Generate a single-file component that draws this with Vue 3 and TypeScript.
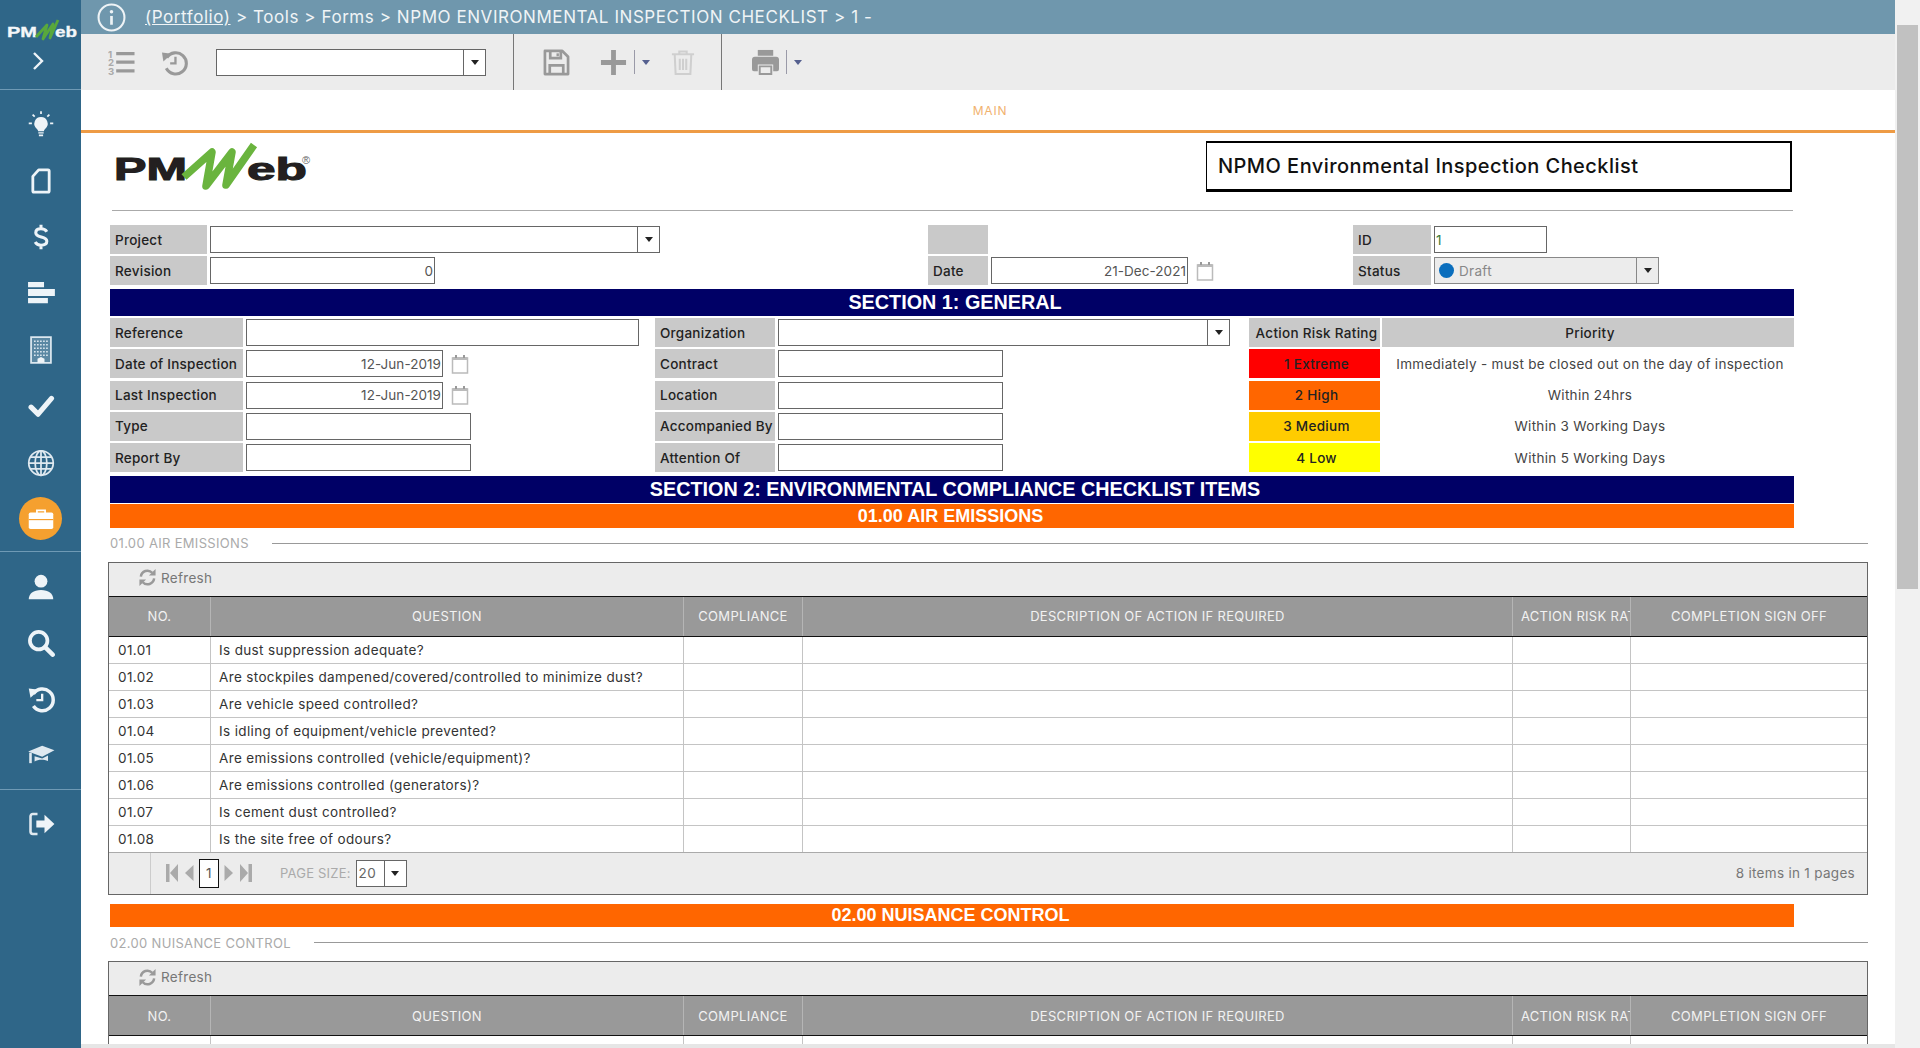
<script setup lang="ts">
type Row = [string, string]

const checklist: { title: string; rows: Row[] }[] = [
  {
    title: '01.00 AIR EMISSIONS',
    rows: [
      ['01.01', 'Is dust suppression adequate?'],
      ['01.02', 'Are stockpiles dampened/covered/controlled to minimize dust?'],
      ['01.03', 'Are vehicle speed controlled?'],
      ['01.04', 'Is idling of equipment/vehicle prevented?'],
      ['01.05', 'Are emissions controlled (vehicle/equipment)?'],
      ['01.06', 'Are emissions controlled (generators)?'],
      ['01.07', 'Is cement dust controlled?'],
      ['01.08', 'Is the site free of odours?'],
    ],
  },
  { title: '02.00 NUISANCE CONTROL', rows: [['', '']] },
]

const columns = ['NO.', 'QUESTION', 'COMPLIANCE', 'DESCRIPTION OF ACTION IF REQUIRED', 'ACTION RISK RATING', 'COMPLETION SIGN OFF']

const ratings = [
  { label: '1 Extreme', cls: 'r-extreme', text: 'Immediately - must be closed out on the day of inspection' },
  { label: '2 High', cls: 'r-high', text: 'Within 24hrs' },
  { label: '3 Medium', cls: 'r-medium', text: 'Within 3 Working Days' },
  { label: '4 Low', cls: 'r-low', text: 'Within 5 Working Days' },
]
</script>

<template>
  <div class="app">
    <aside class="sidebar">
      <div class="side-top">
        <svg class="side-logo" viewBox="0 0 81 46">
          <text x="7" y="37" class="logo-text side" textLength="30" lengthAdjust="spacingAndGlyphs">PM</text>
          <text x="55" y="37" class="logo-text side" textLength="22" lengthAdjust="spacingAndGlyphs">eb</text>
          <path d="M36 37 47 25 43 39 53 24 50 38 58 20" fill="none" stroke="#58a83c" stroke-width="2.800" stroke-linejoin="round" />
        </svg>
        <svg class="side-chevron" viewBox="0 0 16 20"><path d="M4 2l8 8-8 8" fill="none" stroke="#eef4f8" stroke-width="2.400" /></svg>
      </div>

      <div class="side-group first">
        <div class="nav-item">
          <svg viewBox="0 0 24 24">
            <path d="M12 6a5.700 5.700 0 0 0-3.500 10.200c.6.5 1 1.200 1 2h5c0-.8.4-1.500 1-2A5.700 5.700 0 0 0 12 6z" fill="#eef4f8" />
            <path d="M9.700 19h4.600v1.200H9.700zM10.200 21h3.600v1.600h-3.600z" fill="#eef4f8" />
            <path d="M12 1v2.500M4.800 4l1.800 1.700M19.200 4l-1.800 1.700M1.500 11.500h2.700M19.800 11.500h2.700" stroke="#eef4f8" stroke-width="1.500" fill="none" />
          </svg>
        </div>
        <div class="nav-item">
          <svg viewBox="0 0 24 24"><path d="M10 2.500h8a1 1 0 0 1 1 1v17a1 1 0 0 1-1 1H6a1 1 0 0 1-1-1V8z" fill="none" stroke="#eef4f8" stroke-width="2.400" stroke-linejoin="round" /></svg>
        </div>
        <div class="nav-item">
          <svg viewBox="0 0 24 24">
            <path d="M17 7.500C16 5.800 14.300 5 12 5 9.300 5 7.500 6.300 7.500 8.400c0 4.900 9.500 2.400 9.500 7.300 0 2-2 3.300-5 3.300-2.300 0-4-.9-5-2.700M12 1.500V5M12 19v3.500" fill="none" stroke="#eef4f8" stroke-width="2.600" />
          </svg>
        </div>
        <div class="nav-item">
          <svg viewBox="0 0 24 24"><path d="M.9 2.600h13.700v4.500H.9zM.9 8.600h23v6H.9zM.9 16.300h17v4.500H.9z" fill="#eef4f8" /></svg>
        </div>
        <div class="nav-item">
          <svg viewBox="0 0 24 24">
            <path d="M3.500 1h17v22H3.500z" fill="#5b88a3" stroke="#dbe7ef" stroke-width="1.500" />
            <path d="M6 4.500h12M6 7.500h12M6 10.500h12M6 13.500h12M6 16.500h12" stroke="#dbe7ef" stroke-width="1.400" stroke-dasharray="1.400 1.200" />
            <path d="M9 23v-3.500l3-1.500 3 1.500V23z" fill="#eef4f8" />
          </svg>
        </div>
        <div class="nav-item">
          <svg viewBox="0 0 24 24"><path d="M3.500 13l6 6L21 5.500" fill="none" stroke="#eef4f8" stroke-width="4.400" stroke-linecap="round" stroke-linejoin="round" /></svg>
        </div>
        <div class="nav-item">
          <svg viewBox="0 0 24 24" fill="none" stroke="#dfe9f0" stroke-width="1.500">
            <circle cx="12" cy="12" r="10.500" />
            <ellipse cx="12" cy="12" rx="5" ry="10.500" />
            <path d="M12 1.500v21M1.500 12h21M3.200 7h17.600M3.200 17h17.600" />
          </svg>
        </div>
        <div class="nav-item">
          <div class="nav-active">
            <svg viewBox="0 0 24 24">
              <path d="M8.500 7V4.500h7V7" fill="none" stroke="#fff" stroke-width="1.500" />
              <rect x="1.500" y="6.500" width="21" height="14" rx="1.500" fill="#fff" />
              <path d="M1.500 12.500h21" stroke="#f5a02f" stroke-width="1" />
            </svg>
          </div>
        </div>
      </div>

      <div class="side-group second">
        <div class="nav-item">
          <svg viewBox="0 0 24 24" fill="#eef4f8">
            <circle cx="12" cy="7" r="5.500" />
            <path d="M1.500 22.500c0-5 4-8 10.500-8s10.500 3 10.500 8z" />
          </svg>
        </div>
        <div class="nav-item">
          <svg viewBox="0 0 24 24" fill="none" stroke="#eef4f8">
            <circle cx="10" cy="10" r="7.500" stroke-width="3.200" />
            <path d="M15.500 15.500 22 22" stroke-width="3.800" stroke-linecap="round" />
          </svg>
        </div>
        <div class="nav-item">
          <svg viewBox="0 0 24 24">
            <path d="M5.500 7.500A9.300 9.300 0 1 1 5.500 18" fill="none" stroke="#eef4f8" stroke-width="3" />
            <path d="M1.500 3l9 1-7.500 7z" fill="#eef4f8" />
            <path d="M13 7.500V13H8" fill="none" stroke="#eef4f8" stroke-width="2" />
          </svg>
        </div>
        <div class="nav-item">
          <svg viewBox="0 0 24 24" fill="#dfe9f0">
            <path d="M13 4 1 9l12 4.500L23.500 8z" />
            <path d="M6.500 13v4.500c3-1.800 8-1.800 11.500-.3V12.500L13 15z" />
            <path d="M3 10v9" stroke="#dfe9f0" stroke-width="2.200" />
          </svg>
        </div>
      </div>

      <div class="side-group third">
        <div class="nav-item">
          <svg viewBox="0 0 24 24">
            <path d="M9 3.500H5a2 2 0 0 0-2 2v13a2 2 0 0 0 2 2h4" fill="none" stroke="#dfe9f0" stroke-width="2.200" />
            <path d="M8 9h7V4l8.500 8-8.500 8v-5H8z" fill="#eef4f8" />
          </svg>
        </div>
      </div>
    </aside>

    <div class="main">
      <header class="crumb">
        <svg class="info" viewBox="0 0 28 28">
          <circle cx="14" cy="14" r="12.500" fill="none" stroke="#eef3f6" stroke-width="2" />
          <circle cx="14" cy="8.500" r="1.700" fill="#eef3f6" />
          <path d="M14 12.500v8.500" stroke="#eef3f6" stroke-width="2.600" />
        </svg>
        <span class="crumb-text"><u>(Portfolio)</u> &gt; Tools &gt; Forms &gt; NPMO ENVIRONMENTAL INSPECTION CHECKLIST &gt; 1 -</span>
      </header>

      <div class="toolbar">
        <div class="tool-group first">
          <svg class="tool" viewBox="0 0 28 28">
            <text x="0" y="9" class="tool-num">1</text>
            <text x="0" y="18" class="tool-num">2</text>
            <text x="0" y="27" class="tool-num">3</text>
            <path d="M8.500 3h19v3.400h-19zM8.500 12h19v3.400h-19zM8.500 21h19v3.400h-19z" fill="#999" />
          </svg>
          <svg class="tool" viewBox="0 0 28 28">
            <path d="M6 9a11 11 0 1 1-.5 11" fill="none" stroke="#999" stroke-width="3.200" />
            <path d="M1 3.500l10 1.500-8.500 8z" fill="#999" />
            <path d="M15 8v7H9.500" fill="none" stroke="#999" stroke-width="2.400" />
          </svg>
          <div class="select tool-select"><span class="select-value"></span><span class="select-btn"><i class="caret"></i></span></div>
        </div>
        <div class="tool-group second">
          <svg class="tool" viewBox="0 0 28 28" fill="none" stroke="#999" stroke-width="2.800">
            <path d="M2 2h18l6 6v18H2z" stroke-linejoin="round" />
            <path d="M7.500 2.500v7h11v-7M7 26v-9h14v9" />
            <path d="M14 4.500h2.500v3H14z" fill="#999" stroke="none" />
          </svg>
          <div class="tool-split">
            <svg class="tool" viewBox="0 0 28 28"><path d="M11.500 1h5v10.500H27v5H16.500V27h-5V16.500H1v-5h10.500z" fill="#999" /></svg>
            <span class="split-line"></span>
            <i class="caret small"></i>
          </div>
          <svg class="tool trash" viewBox="0 0 26 28" fill="none" stroke="#cfcfcf" stroke-width="2.200">
            <path d="M1 5h24M9 5V2h8v3M4 5l1 21.500h16L22 5" />
            <path d="M9.500 10v12M13 10v12M16.500 10v12" />
          </svg>
        </div>
        <div class="tool-group third">
          <div class="tool-split">
            <svg class="tool" viewBox="0 0 28 28">
              <path d="M6 1h16v6H6z" fill="#999" />
              <path d="M3 8h22a3 3 0 0 1 3 3v10a2 2 0 0 1-2 2h-4v-7H6v7H2a2 2 0 0 1-2-2V11a3 3 0 0 1 3-3z" fill="#999" />
              <path d="M8 18h12v8H8z" fill="none" stroke="#999" stroke-width="2" />
            </svg>
            <span class="split-line"></span>
            <i class="caret small"></i>
          </div>
        </div>
      </div>

      <div class="tabs"><span class="tab">MAIN</span></div>

      <div class="content">
        <div class="form-head">
          <svg class="logo" viewBox="0 0 210 60">
            <text x="5" y="39" class="logo-text big" textLength="73" lengthAdjust="spacingAndGlyphs">PM</text>
            <text x="138" y="39" class="logo-text big" textLength="60" lengthAdjust="spacingAndGlyphs">eb</text>
            <path d="M75 36 103 11 97 45 123 11 117 44 145 4" fill="none" stroke="#6ab43e" stroke-width="7.500" stroke-linejoin="round" />
            <text x="193" y="23" class="logo-mark">®</text>
          </svg>
          <div class="form-title">NPMO Environmental Inspection Checklist</div>
        </div>
        <div class="rule"></div>

        <div class="top-form">
          <label class="lbl">Project</label>
          <div class="cell"><div class="select project"><span class="select-value"></span><span class="select-btn"><i class="caret"></i></span></div></div>
          <label class="lbl"></label>
          <div class="cell"></div>
          <label class="lbl">ID</label>
          <div class="cell"><input class="input id-input" value="1" readonly /></div>

          <label class="lbl">Revision</label>
          <div class="cell"><input class="input revision num" value="0" readonly /></div>
          <label class="lbl">Date</label>
          <div class="cell">
            <input class="input date-main num" value="21-Dec-2021" readonly />
            <svg class="cal" viewBox="0 0 18 20"><path d="M1.500 4h15v15h-15z" fill="#fff" stroke="#bbb" stroke-width="1.500" /><path d="M1.500 3h15v3h-15z" fill="#bbb" /><path d="M5 1v3M13 1v3" stroke="#999" stroke-width="2" /></svg>
          </div>
          <label class="lbl">Status</label>
          <div class="cell">
            <div class="select status">
              <span class="select-value"><i class="dot"></i>Draft</span>
              <span class="select-btn"><i class="caret"></i></span>
            </div>
          </div>
        </div>

        <div class="section-bar">SECTION 1: GENERAL</div>

        <div class="general">
          <label class="lbl">Reference</label>
          <div class="cell"><input class="input wide" readonly /></div>
          <label class="lbl">Organization</label>
          <div class="cell"><div class="select org"><span class="select-value"></span><span class="select-btn"><i class="caret"></i></span></div></div>
          <div class="rate-head">Action Risk Rating</div>
          <div class="rate-head">Priority</div>

          <label class="lbl">Date of Inspection</label>
          <div class="cell">
            <input class="input date num" value="12-Jun-2019" readonly />
            <svg class="cal" viewBox="0 0 18 20"><path d="M1.500 4h15v15h-15z" fill="#fff" stroke="#bbb" stroke-width="1.500" /><path d="M1.500 3h15v3h-15z" fill="#bbb" /><path d="M5 1v3M13 1v3" stroke="#999" stroke-width="2" /></svg>
          </div>
          <label class="lbl">Contract</label>
          <div class="cell"><input class="input short" readonly /></div>
          <div class="rate" :class="ratings[0].cls">{{ ratings[0].label }}</div>
          <div class="priority">{{ ratings[0].text }}</div>

          <label class="lbl">Last Inspection</label>
          <div class="cell">
            <input class="input date num" value="12-Jun-2019" readonly />
            <svg class="cal" viewBox="0 0 18 20"><path d="M1.500 4h15v15h-15z" fill="#fff" stroke="#bbb" stroke-width="1.500" /><path d="M1.500 3h15v3h-15z" fill="#bbb" /><path d="M5 1v3M13 1v3" stroke="#999" stroke-width="2" /></svg>
          </div>
          <label class="lbl">Location</label>
          <div class="cell"><input class="input short" readonly /></div>
          <div class="rate" :class="ratings[1].cls">{{ ratings[1].label }}</div>
          <div class="priority">{{ ratings[1].text }}</div>

          <label class="lbl">Type</label>
          <div class="cell"><input class="input short" readonly /></div>
          <label class="lbl">Accompanied By</label>
          <div class="cell"><input class="input short" readonly /></div>
          <div class="rate" :class="ratings[2].cls">{{ ratings[2].label }}</div>
          <div class="priority">{{ ratings[2].text }}</div>

          <label class="lbl">Report By</label>
          <div class="cell"><input class="input short" readonly /></div>
          <label class="lbl">Attention Of</label>
          <div class="cell"><input class="input short" readonly /></div>
          <div class="rate" :class="ratings[3].cls">{{ ratings[3].label }}</div>
          <div class="priority">{{ ratings[3].text }}</div>
        </div>

        <div class="section-bar">SECTION 2: ENVIRONMENTAL COMPLIANCE CHECKLIST ITEMS</div>

        <section v-for="(group, idx) in checklist" :key="group.title" class="group" :class="{ later: idx > 0 }">
          <div class="orange-bar"><span>{{ group.title }}</span></div>
          <div class="legend"><span>{{ group.title }}</span><i></i></div>
          <div class="grid">
            <div class="grid-tools">
              <svg class="refresh" viewBox="0 0 20 20" fill="none" stroke="#999" stroke-width="2.600">
                <path d="M3 9a7 7 0 0 1 12-4" />
                <path d="M17 11a7 7 0 0 1-12 4" />
                <path d="M18.500 1v7h-7zM1.500 19v-7h7z" fill="#999" stroke="none" />
              </svg>
              <span>Refresh</span>
            </div>
            <table>
              <colgroup>
                <col class="c-no" /><col class="c-q" /><col class="c-comp" /><col class="c-desc" /><col class="c-risk" /><col />
              </colgroup>
              <thead>
                <tr><th v-for="c in columns" :key="c"><span>{{ c }}</span></th></tr>
              </thead>
              <tbody>
                <tr v-for="(row, i) in group.rows" :key="i">
                  <td>{{ row[0] }}</td>
                  <td>{{ row[1] }}</td>
                  <td></td><td></td><td></td><td></td>
                </tr>
              </tbody>
            </table>
            <div v-if="group.rows.length > 1" class="pager">
              <div class="pager-nav">
                <svg class="pg-end" viewBox="0 0 14 20"><path d="M1 1h3.500v18H1zM13 1v18L5 10z" fill="#aaa" /></svg>
                <svg class="pg-step" viewBox="0 0 10 20"><path d="M9.500 2v16L1 10z" fill="#aaa" /></svg>
                <span class="page-box">1</span>
                <svg class="pg-step" viewBox="0 0 10 20"><path d="M.5 2v16L9 10z" fill="#aaa" /></svg>
                <svg class="pg-end" viewBox="0 0 14 20"><path d="M13 1H9.500v18H13zM1 1v18l8-9z" fill="#aaa" /></svg>
                <span class="page-label">PAGE SIZE:</span>
                <div class="select page-size"><span class="select-value">20</span><span class="select-btn"><i class="caret"></i></span></div>
              </div>
              <span class="page-info">8 items in 1 pages</span>
            </div>
          </div>
        </section>
      </div>
      <div class="h-track"></div>
    </div>

    <div class="scrollbar"><div class="thumb"></div></div>
  </div>
</template>

<style scoped>
.app {
  display: flex;
  height: 100vh;
  overflow: hidden;
  background: #fff;
  color: #222;
  font-family: Inter, 'Open Sans', sans-serif;
  font-size: 13.500px;
  letter-spacing: 0.3px;
}

/* left nav */
.sidebar {
  flex: 0 0 81px;
  background: #2f6688;
}
.side-top {
  height: 90px;
  border-bottom: 1px solid #6f9ab5;
  box-sizing: border-box;
}
.side-logo {
  display: block;
  width: 81px;
  height: 46px;
}
.logo-text {
  font-family: 'Liberation Sans', Arial, sans-serif;
  font-weight: 700;
  letter-spacing: 0;
}
.logo-text.side {
  font-size: 14px;
  fill: #f4f7f9;
  stroke: #f4f7f9;
  stroke-width: 0.3;
}
.logo-text.big {
  font-size: 32px;
  fill: #231f20;
  stroke: #231f20;
  stroke-width: 1.1;
}
.logo-mark {
  font-family: 'Liberation Sans', Arial, sans-serif;
  font-size: 11px;
  fill: #666;
  letter-spacing: 0;
}
.side-chevron {
  display: block;
  width: 16px;
  height: 20px;
  margin: 5px 0 0 30px;
}
.side-group {
  border-bottom: 1px solid #6f9ab5;
}
.side-group.first { padding: 6px 0 4px; }
.side-group.second { padding: 7px 0 6px; }
.side-group.third { padding: 6px 0 0; border-bottom: 0; }
.nav-item {
  height: 56px;
  display: flex;
  align-items: center;
  justify-content: center;
}
.side-group.first .nav-item { height: 56.400px; }
.nav-item svg {
  width: 28px;
  height: 28px;
}
.nav-active {
  width: 43px;
  height: 43px;
  border-radius: 50%;
  background: #f5a02f;
  display: flex;
  align-items: center;
  justify-content: center;
}

/* header bars */
.main {
  flex: 1;
  min-width: 0;
  display: flex;
  flex-direction: column;
  position: relative;
}
.crumb {
  flex: 0 0 34px;
  background: #6f97ad;
  display: flex;
  align-items: center;
  color: #f0f4f6;
  font-size: 17px;
  padding-left: 16px;
}
.info {
  width: 29px;
  height: 29px;
  margin-right: 19px;
}
.crumb-text {
  letter-spacing: 0.56px;
}
.toolbar {
  flex: 0 0 56px;
  background: #ececec;
  display: flex;
}
.tool-group {
  display: flex;
  align-items: center;
  border-right: 1px solid #777;
  box-sizing: border-box;
}
.tool-group.first { width: 433px; padding-left: 27px; gap: 26px; }
.tool-group.second { width: 208px; padding-left: 29px; gap: 30px; }
.tool-group.third { border-right: 0; padding-left: 30px; }
.tool {
  width: 27px;
  height: 27px;
  flex: none;
}
.tool.trash { width: 24px; margin-left: -9px; }
.tool-num {
  font-size: 10px;
  font-weight: 700;
  fill: #aaa;
}
.tool-select {
  width: 270px;
  margin-left: 2px;
}
.tool-split {
  display: flex;
  align-items: center;
}
.split-line {
  width: 1px;
  height: 24px;
  background: #9a9aa8;
  margin: 0 7px 0 7px;
}
.caret {
  display: block;
  width: 0;
  height: 0;
  border: 4px solid transparent;
  border-top: 5px solid #222;
  border-bottom: 0;
}
.caret.small {
  border-top-color: #55608f;
}
.tabs {
  flex: 0 0 43px;
  box-sizing: border-box;
  border-bottom: 3px solid #ee9b45;
  display: flex;
  align-items: center;
  justify-content: center;
  padding-left: 4px;
}
.tab {
  color: #f1b26f;
  font-size: 12px;
  letter-spacing: 0.8px;
}

/* form */
.content {
  flex: 1;
  min-height: 0;
  overflow: hidden;
  padding-left: 29px;
}
.form-head {
  height: 77px;
  width: 1682px;
  display: flex;
  justify-content: space-between;
  align-items: flex-start;
}
.logo {
  width: 210px;
  height: 60px;
  margin: 8px 0 0 -1px;
}
.form-title {
  width: 586px;
  height: 51px;
  margin-top: 8px;
  box-sizing: border-box;
  border: 1px solid #000;
  border-width: 2px 2px 3px 1px;
  display: flex;
  align-items: center;
  padding-left: 11px;
  font-size: 20px;
  font-weight: 500;
  color: #111;
  letter-spacing: 0.45px;
}
.rule {
  width: 1681px;
  margin-left: 2px;
  height: 1px;
  background: #aaa;
}
.lbl {
  background: #c9c9c9;
  display: flex;
  align-items: center;
  padding-left: 5px;
  font-weight: 500;
  color: #222;
  letter-spacing: 0.25px;
  white-space: nowrap;
  overflow: hidden;
}
.cell {
  display: flex;
  align-items: center;
  padding-left: 3px;
  min-width: 0;
}
.input {
  box-sizing: border-box;
  height: 27px;
  border: 1px solid #666;
  background: #fff;
  padding: 0 1px;
  font: inherit;
  letter-spacing: 0.05px;
  color: #555;
  outline: 0;
}
.input.num { text-align: right; }
.top-form {
  margin-top: 14px;
  width: 1684px;
  display: grid;
  grid-template-columns: 97px 721px 60px 365px 78px 1fr;
  grid-auto-rows: 29px;
  row-gap: 2px;
}
.project { width: 450px; }
.revision { width: 225px; }
.date-main { width: 197px; }
.id-input { width: 113px; color: #3a7a3a; }
.cal {
  width: 18px;
  height: 20px;
  margin-left: 8px;
  flex: none;
}
.select {
  box-sizing: border-box;
  height: 27px;
  border: 1px solid #666;
  background: #fff;
  display: flex;
}
.select-value {
  flex: 1;
  min-width: 0;
  padding-left: 2px;
  display: flex;
  align-items: center;
  color: #666;
}
.select-btn {
  flex: 0 0 21px;
  border-left: 1px solid #666;
  display: flex;
  align-items: center;
  justify-content: center;
  background: #fff;
}
.select.status { width: 225px; background: #ececec; border-color: #888; }
.status .select-value { color: #888; }
.status .select-btn { background: #ececec; border-left-color: #888; }
.dot {
  width: 15px;
  height: 15px;
  border-radius: 50%;
  background: #0a6ebd;
  margin: 0 5px 0 2px;
}
.section-bar {
  width: 1684px;
  margin-top: 4px;
  padding-left: 6px;
  box-sizing: border-box;
  background: #000066;
  color: #fff;
  font-family: 'Liberation Sans', Arial, sans-serif;
  font-weight: 700;
  font-size: 19.800px;
  letter-spacing: 0;
  text-align: center;
  line-height: 27px;
}
.general {
  margin-top: 2px;
  width: 1684px;
  display: grid;
  grid-template-columns: 133px 412px 120px 474px 131px 1fr;
  grid-auto-rows: 29px;
  row-gap: 2.250px;
}
.wide { width: 393px; }
.date { width: 197px; }
.short { width: 225px; }
.org { width: 452px; }
.rate-head {
  background: #c9c9c9;
  display: flex;
  align-items: center;
  justify-content: center;
  padding-left: 4px;
  font-weight: 500;
  white-space: nowrap;
}
.rate-head + .rate-head { margin-left: 2px; }
.rate {
  display: flex;
  align-items: center;
  justify-content: center;
  padding-left: 4px;
  font-weight: 500;
}
.r-extreme { background: #ff0000; }
.r-high { background: #ff6600; }
.r-medium { background: #ffcc00; }
.r-low { background: #ffff00; }
.priority {
  display: flex;
  align-items: center;
  justify-content: center;
  margin-left: 2px;
  padding-left: 4px;
  color: #444;
  white-space: nowrap;
}

/* checklist groups */
.group { width: 1760px; margin-left: -2px; }
.group.later { margin-top: 9px; }
.orange-bar {
  width: 1684px;
  margin: 1px 0 0 2px;
  height: 23.500px;
  padding: 1px 3px 0 0;
  box-sizing: border-box;
  background: #ff6600;
  color: #fff;
  font-family: 'Liberation Sans', Arial, sans-serif;
  font-weight: 700;
  font-size: 18px;
  letter-spacing: 0;
  display: flex;
  align-items: center;
  justify-content: center;
}
.legend {
  margin: 8px 0 11px 2px;
  height: 15px;
  display: flex;
  align-items: center;
  gap: 23px;
  color: #aaa;
  font-size: 13px;
  letter-spacing: 0.32px;
  white-space: nowrap;
}
.legend i {
  flex: 1;
  height: 1px;
  background: #999;
}
.grid {
  box-sizing: border-box;
  border: 1px solid #666;
  background: #fff;
}
.grid-tools {
  height: 34px;
  padding: 0 0 3px 29px;
  box-sizing: border-box;
  background: #ececec;
  border-bottom: 1px solid #111;
  display: flex;
  align-items: center;
  gap: 4px;
  color: #777;
}
.refresh {
  width: 19px;
  height: 19px;
}
table {
  width: 100%;
  border-collapse: collapse;
  table-layout: fixed;
}
.c-no { width: 101.500px; }
.c-q { width: 473px; }
.c-comp { width: 119px; }
.c-desc { width: 710px; }
.c-risk { width: 118px; }
th {
  height: 39px;
  padding: 0;
  background: #999;
  border-bottom: 1px solid #111;
  border-right: 1px solid #b5b5b5;
  color: #f2f2f2;
  font-weight: 400;
  font-size: 13px;
  letter-spacing: 0.3px;
  white-space: nowrap;
  overflow: hidden;
  text-align: center;
}
th:last-child, td:last-child { border-right: 0; }
th:nth-child(5) { text-align: left; padding-left: 8px; }
td {
  height: 26px;
  padding: 0 8px;
  border-bottom: 1px solid #c4c4c4;
  border-right: 1px solid #c4c4c4;
  color: #333;
  letter-spacing: 0.36px;
  white-space: nowrap;
}
td:first-child { padding-left: 9px; }
.pager {
  height: 41px;
  background: #ececec;
  border-top: 1px solid #aaa;
  margin-top: -1px;
  display: flex;
  align-items: center;
  justify-content: space-between;
  padding-right: 12px;
}
.pager-nav {
  align-self: stretch;
  margin-left: 41px;
  padding-left: 14px;
  border-left: 1px solid #ccc;
  display: flex;
  align-items: center;
}
.pager-nav svg {
  height: 20px;
  margin-right: 5px;
}
.pg-end { width: 14px; }
.pg-step { width: 10px; }
.page-box {
  width: 20px;
  height: 29px;
  box-sizing: border-box;
  border: 1px solid #111;
  background: #fff;
  display: flex;
  align-items: center;
  justify-content: center;
  margin-right: 5px;
  color: #555;
}
.page-label {
  color: #aaa;
  font-size: 13px;
  letter-spacing: 0.2px;
  margin: 0 5px 0 22px;
}
.page-size { width: 51px; }
.page-info { color: #777; }

.h-track {
  position: absolute;
  left: 0;
  right: 0;
  bottom: 0;
  height: 4px;
  background: #e6e6e6;
}
.scrollbar {
  flex: 0 0 25px;
  background: #f1f1f1;
  padding: 25px 2px 0;
  box-sizing: border-box;
}
.thumb {
  height: 564px;
  background: #c1c1c1;
}
</style>

<style>
html, body { margin: 0; overflow: hidden; }
</style>
